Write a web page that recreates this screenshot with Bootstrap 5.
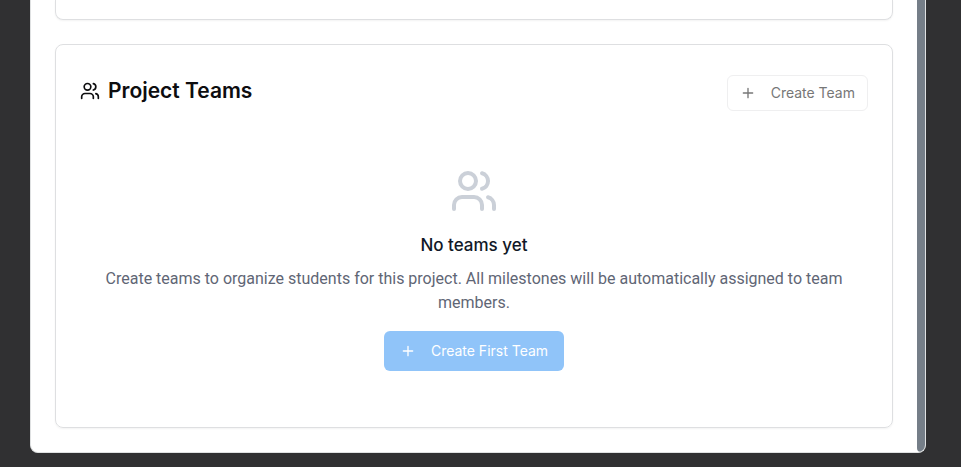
<!DOCTYPE html>
<html lang="en">
<head>
<meta charset="utf-8">
<meta name="viewport" content="width=device-width, initial-scale=1">
<title>Project Teams</title>
<link href="https://cdn.jsdelivr.net/npm/bootstrap@5.3.0/dist/css/bootstrap.min.css" rel="stylesheet">
<style>
  body { background: #303032; font-family: Inter, "Liberation Sans", sans-serif; color: #0d0d0f; }
  .backdrop-area { padding: 0 35px 14px 30px; }
  .dialog-panel { background: #fff; border: 1px solid #dfe1e2; border-top: 0; border-radius: 0 0 8px 8px; overflow: hidden; }
  .scroll-thumb { width: 8px; background: #757e88; border-radius: 0 0 4px 4px; }
  .panel-card { border: 1px solid #dedfe1; border-radius: 8px; box-shadow: 0 1px 2px rgba(0,0,0,.05); }
  .panel-end { height: 20px; border-top: 0; border-radius: 0 0 8px 8px; }
  .teams-card { padding: 30px 24px 56px; }
  .teams-title { font-size: 21px; line-height: 32px; font-weight: 600; }
  .empty-state { padding-top: 56px; }
  .empty-title { font-size: 17px; line-height: 28px; font-weight: 500; color: #111827; }
  .empty-text { font-family: Roboto, Inter, sans-serif; font-size: 16px; line-height: 24px; color: #5f6675; }
  .team-btn { font-size: 14px; line-height: 20px; font-weight: 400; border-radius: 6px; gap: 15px; }
  .team-btn:disabled { opacity: 1; }
  .team-btn-outline, .team-btn-outline:disabled { padding: 7px 12px; color: #777; background: #fff; border: 1px solid #efeff0; }
  .team-btn-fill, .team-btn-fill:disabled { padding: 10px 16px; color: #fff; background: #90c4f9; border: 0; }
  .line-icon { fill: none; stroke: currentColor; stroke-width: 2; stroke-linecap: round; stroke-linejoin: round; flex: none; }
  .icon-muted { color: #cbd0d8; }
</style>
<script src="https://cdn.jsdelivr.net/npm/bootstrap@5.3.0/dist/js/bootstrap.bundle.min.js" defer></script>
</head>
<body>
<svg class="d-none" aria-hidden="true">
  <symbol id="users" viewBox="0 0 24 24">
    <path d="M16 21v-2a4 4 0 0 0-4-4H6a4 4 0 0 0-4 4v2"/><circle cx="9" cy="7" r="4"/><path d="M22 21v-2a4 4 0 0 0-3-3.87"/><path d="M16 3.13a4 4 0 0 1 0 7.75"/>
  </symbol>
  <symbol id="plus" viewBox="0 0 24 24"><path d="M5 12h14M12 5v14"/></symbol>
</svg>
<div class="backdrop-area">
  <main class="dialog-panel d-flex">
    <div class="flex-grow-1 d-flex flex-column gap-4 px-4 pb-4">
      <div class="panel-card panel-end"></div>
      <section class="panel-card teams-card">
        <header class="d-flex justify-content-between align-items-start">
          <h2 class="teams-title d-flex align-items-center gap-2 m-0">
            <svg class="line-icon" width="20" height="20" aria-hidden="true"><use href="#users"/></svg>
            <span>Project Teams</span>
          </h2>
          <button type="button" class="btn team-btn team-btn-outline d-flex align-items-center" disabled>
            <svg class="line-icon" width="16" height="16" aria-hidden="true"><use href="#plus"/></svg>
            Create Team
          </button>
        </header>
        <div class="empty-state d-flex flex-column align-items-center text-center">
          <svg class="line-icon icon-muted mb-3" width="48" height="48" aria-hidden="true"><use href="#users"/></svg>
          <h3 class="empty-title mb-2">No teams yet</h3>
          <p class="empty-text mb-3">Create teams to organize students for this project. All milestones will be automatically assigned to team members.</p>
          <button type="button" class="btn team-btn team-btn-fill d-flex align-items-center" disabled>
            <svg class="line-icon" width="16" height="16" aria-hidden="true"><use href="#plus"/></svg>
            Create First Team
          </button>
        </div>
      </section>
    </div>
    <div class="scroll-thumb flex-shrink-0"></div>
  </main>
</div>
</body>
</html>
